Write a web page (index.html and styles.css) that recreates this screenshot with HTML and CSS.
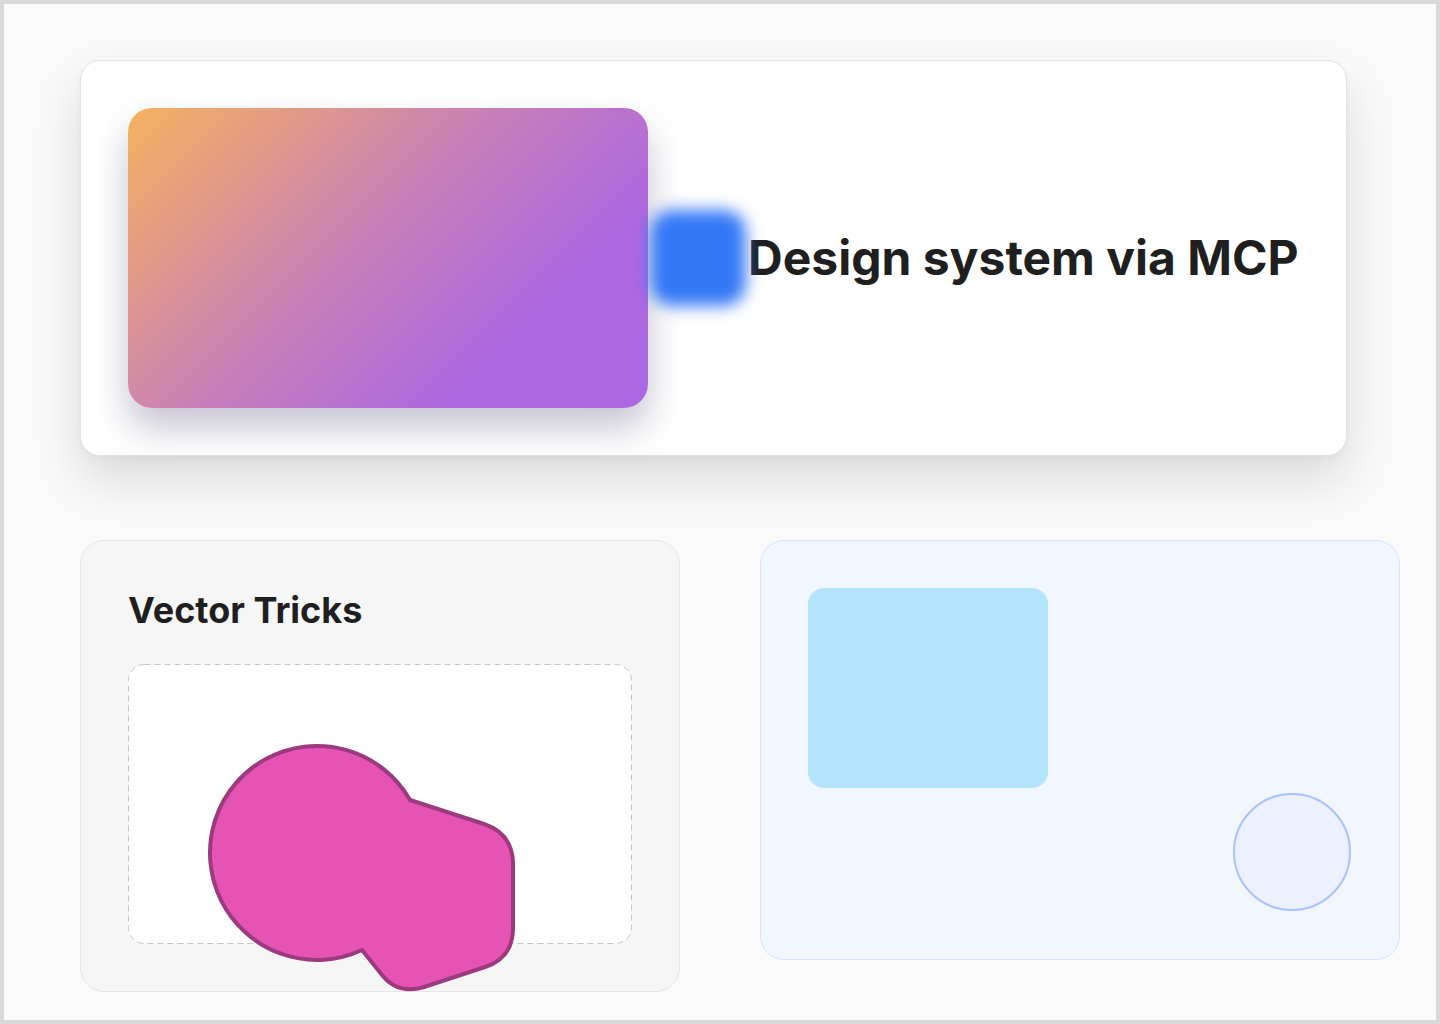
FILE: index.html
```html
<!DOCTYPE html>
<html lang="en">
<head>
<meta charset="utf-8">
<title>Design system via MCP</title>
<link rel="stylesheet" href="styles.css">
</head>
<body>
<div class="frame">
  <section class="hero">
    <div class="hero-gradient"></div>
    <div class="hero-blur"></div>
    <h1 class="hero-title">Design system via MCP</h1>
  </section>
  <div class="bottom-row">
    <section class="vector-card">
      <h2 class="vector-title">Vector Tricks</h2>
      <div class="vector-canvas">
        <svg class="vector-border" width="504" height="280" viewBox="0 0 504 280">
          <rect x="0.5" y="0.5" width="503" height="279" rx="16" ry="16" fill="#ffffff" stroke="#c6c6c6" stroke-width="1" stroke-dasharray="6 4"/>
        </svg>
        <svg class="vector-shape" width="400" height="340" viewBox="0 0 400 340">
          <path d="M282 136 L356 160 Q385 170 385 200 L385 264 Q385 294 357 303 L296 323 Q270 331 254 311 L234 286 A107 107 0 1 1 282 136 Z" fill="#e654b3" stroke="#9b3a7f" stroke-width="4" stroke-linejoin="round"/>
        </svg>
      </div>
    </section>
    <section class="shapes-card">
      <div class="shapes-rect"></div>
      <div class="shapes-circle"></div>
    </section>
  </div>
</div>
</body>
</html>
```
FILE: styles.css
```css
* { box-sizing: border-box; }
html, body { margin: 0; padding: 0; }
body {
  font-family: Inter, "Noto Sans", "Liberation Sans", sans-serif;
  color: #1f1f1f;
  background: #fafafa;
}
.frame {
  width: 1440px;
  height: 1024px;
  border: 4px solid #d9d9d9;
  background: #fafafa;
  padding: 56px 0 0 76px;
  display: flex;
  flex-direction: column;
  align-items: flex-start;
  gap: 84px;
  overflow: hidden;
}
.hero {
  display: inline-flex;
  align-items: center;
  padding: 47px;
  border: 1px solid #e3e3e3;
  border-radius: 20px;
  background: #ffffff;
  box-shadow: 0 24px 50px rgba(0, 0, 0, 0.13), 0 2px 6px rgba(0, 0, 0, 0.04);
}
.hero-gradient {
  width: 520px;
  height: 300px;
  border-radius: 24px;
  background: linear-gradient(135deg, #f6b25e 0%, #c77fb8 45%, #ae68e0 75%, #ab68e2 100%);
  box-shadow: 0 20px 36px rgba(50, 40, 90, 0.28);
  flex: none;
}
.hero-blur {
  width: 96px;
  height: 96px;
  margin: 0 2px;
  border-radius: 22px;
  background: #3478f6;
  filter: blur(8px);
  flex: none;
}
.hero-title {
  margin: 0;
  font-size: 48px;
  font-weight: 700;
  line-height: 1.2;
  white-space: nowrap;
  color: #1f1f1f;
}
.bottom-row {
  display: flex;
  align-items: flex-start;
  gap: 80px;
}
.vector-card {
  width: 600px;
  height: 452px;
  padding: 47px;
  border: 1px solid #e6e6e6;
  border-radius: 24px;
  background: #f6f6f6;
}
.vector-title {
  margin: 0 0 32px;
  font-size: 36px;
  font-weight: 700;
  line-height: 44px;
  color: #1f1f1f;
}
.vector-canvas {
  position: relative;
  width: 504px;
  height: 280px;
}
.vector-border {
  display: block;
}
.vector-shape {
  position: absolute;
  left: 0;
  top: 0;
  overflow: visible;
}
.shapes-card {
  width: 640px;
  height: 420px;
  padding: 47px;
  border: 1px solid #d6e3ff;
  border-radius: 24px;
  background: #f1f6ff;
  display: flex;
  flex-direction: column;
  justify-content: space-between;
}
.shapes-rect {
  width: 240px;
  height: 200px;
  border-radius: 16px;
  background: #b3e5fc;
}
.shapes-circle {
  align-self: flex-end;
  width: 118px;
  height: 118px;
  border-radius: 50%;
  border: 2px solid #a9c2ff;
  background: #ecf1ff;
  margin-right: 1px;
  margin-bottom: 1px;
}
```
